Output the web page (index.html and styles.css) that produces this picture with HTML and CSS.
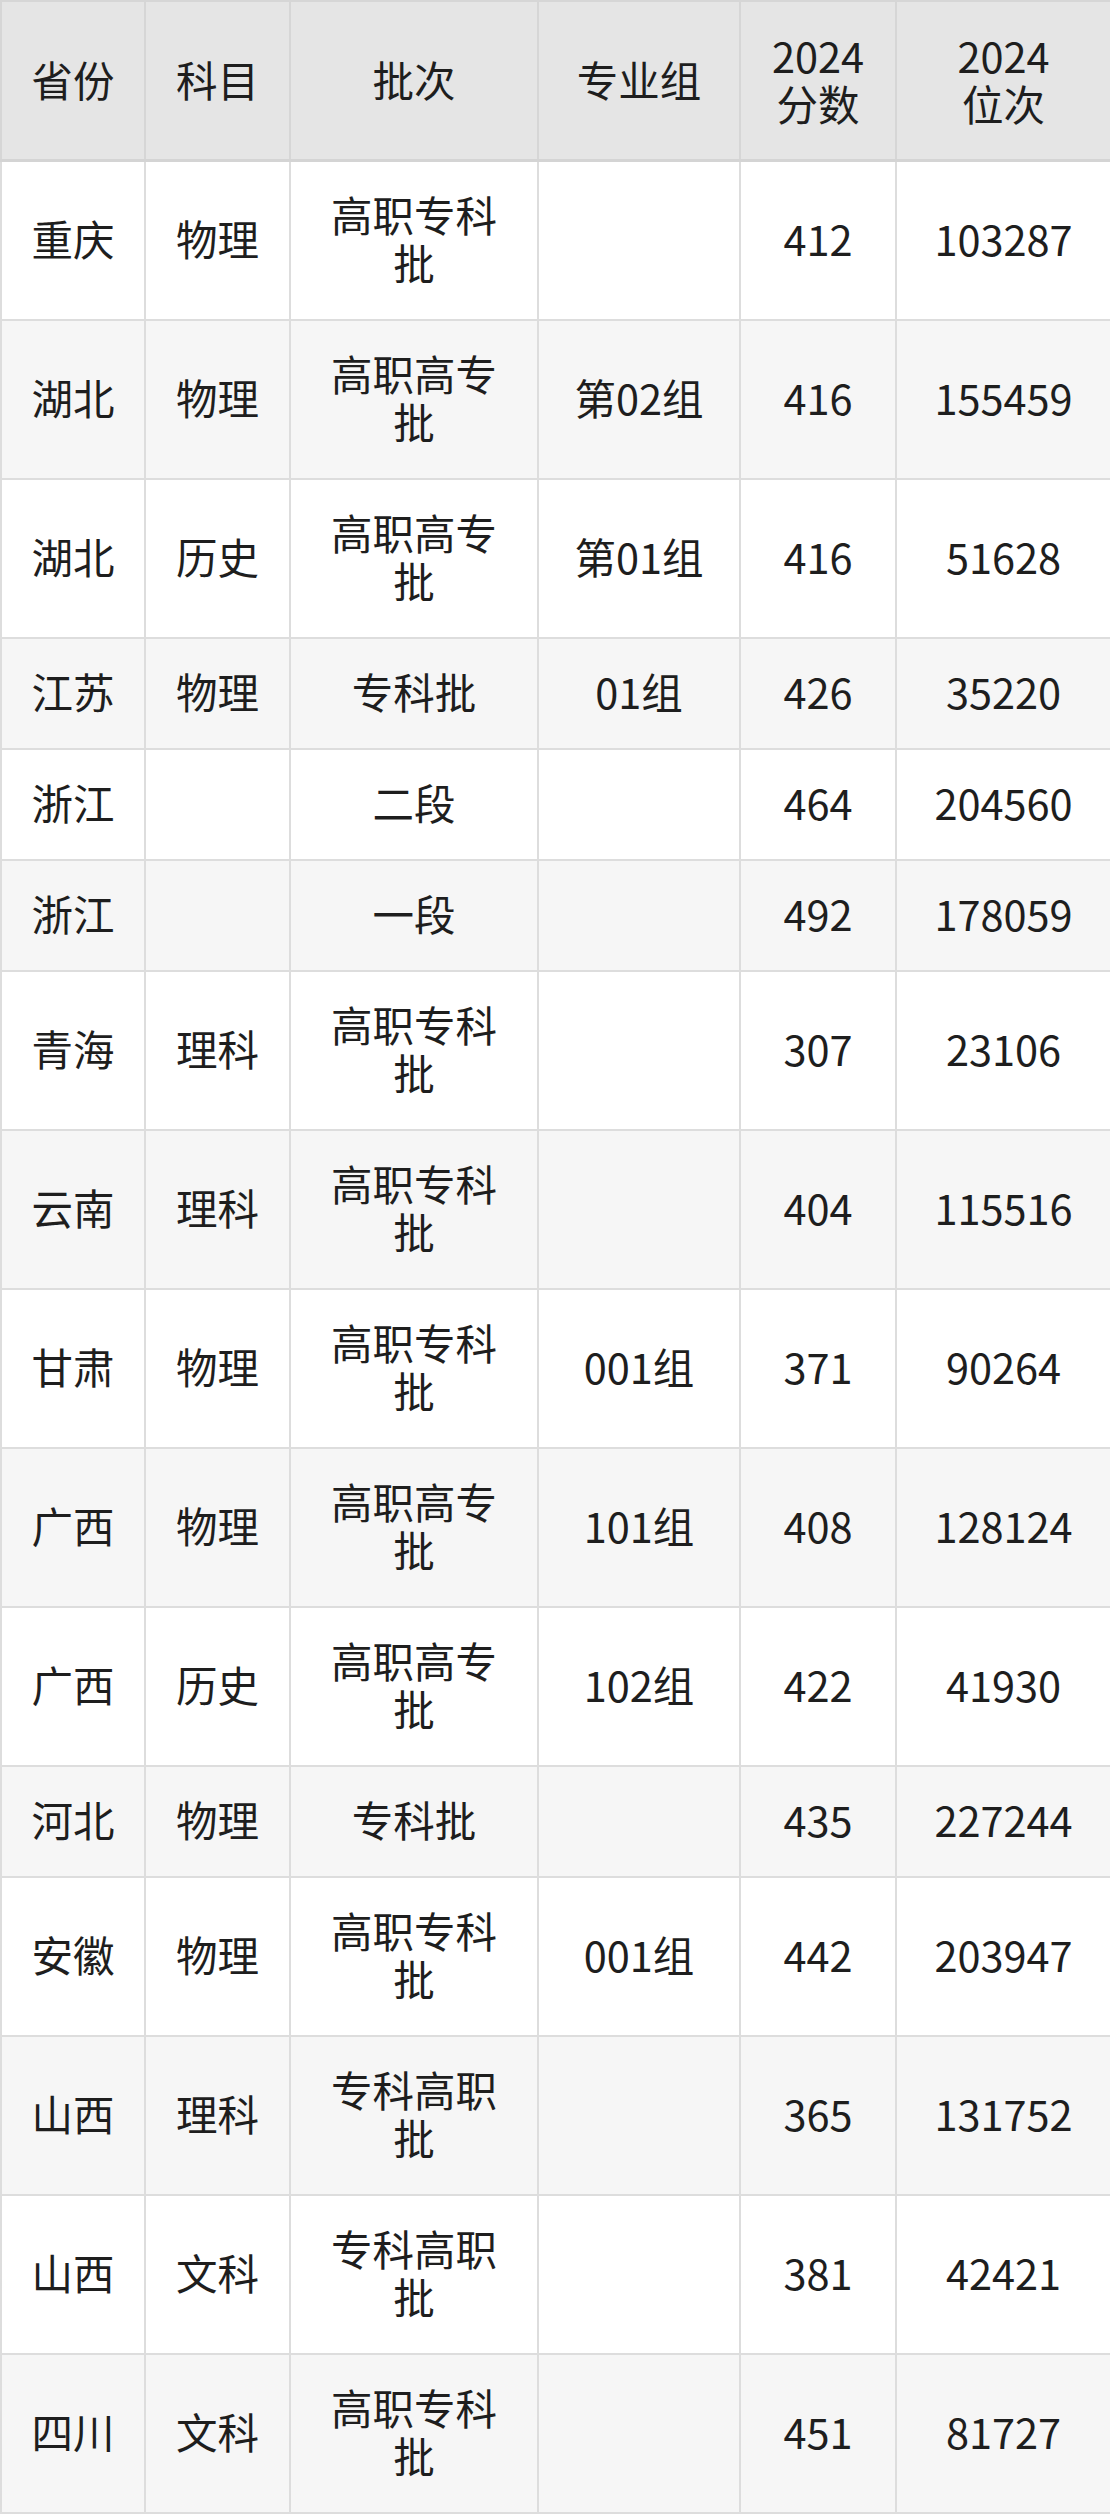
FILE: index.html
```html
<!DOCTYPE html>
<html lang="zh-CN">
<head>
<meta charset="utf-8">
<title>2024 分数位次</title>
<link rel="stylesheet" href="styles.css">
</head>
<body>
<table class="score-table">
  <colgroup>
    <col class="c-prov"><col class="c-subj"><col class="c-batch"><col class="c-group"><col class="c-score"><col class="c-rank">
  </colgroup>
  <thead>
    <tr><th>省份</th><th>科目</th><th>批次</th><th>专业组</th><th>2024<br>分数</th><th>2024<br>位次</th></tr>
  </thead>
  <tbody>
    <tr><td>重庆</td><td>物理</td><td>高职专科<br>批</td><td></td><td>412</td><td>103287</td></tr>
    <tr><td>湖北</td><td>物理</td><td>高职高专<br>批</td><td>第02组</td><td>416</td><td>155459</td></tr>
    <tr><td>湖北</td><td>历史</td><td>高职高专<br>批</td><td>第01组</td><td>416</td><td>51628</td></tr>
    <tr><td>江苏</td><td>物理</td><td>专科批</td><td>01组</td><td>426</td><td>35220</td></tr>
    <tr><td>浙江</td><td></td><td>二段</td><td></td><td>464</td><td>204560</td></tr>
    <tr><td>浙江</td><td></td><td>一段</td><td></td><td>492</td><td>178059</td></tr>
    <tr><td>青海</td><td>理科</td><td>高职专科<br>批</td><td></td><td>307</td><td>23106</td></tr>
    <tr><td>云南</td><td>理科</td><td>高职专科<br>批</td><td></td><td>404</td><td>115516</td></tr>
    <tr><td>甘肃</td><td>物理</td><td>高职专科<br>批</td><td>001组</td><td>371</td><td>90264</td></tr>
    <tr><td>广西</td><td>物理</td><td>高职高专<br>批</td><td>101组</td><td>408</td><td>128124</td></tr>
    <tr><td>广西</td><td>历史</td><td>高职高专<br>批</td><td>102组</td><td>422</td><td>41930</td></tr>
    <tr><td>河北</td><td>物理</td><td>专科批</td><td></td><td>435</td><td>227244</td></tr>
    <tr><td>安徽</td><td>物理</td><td>高职专科<br>批</td><td>001组</td><td>442</td><td>203947</td></tr>
    <tr><td>山西</td><td>理科</td><td>专科高职<br>批</td><td></td><td>365</td><td>131752</td></tr>
    <tr><td>山西</td><td>文科</td><td>专科高职<br>批</td><td></td><td>381</td><td>42421</td></tr>
    <tr><td>四川</td><td>文科</td><td>高职专科<br>批</td><td></td><td>451</td><td>81727</td></tr>
  </tbody>
</table>
</body>
</html>
```

FILE: styles.css
```css
html, body {
  margin: 0;
  padding: 0;
  background: #ffffff;
}

.score-table {
  width: 1110px;
  table-layout: fixed;
  border-collapse: collapse;
  font-family: "Noto Sans CJK SC", "Noto Sans", sans-serif;
  font-size: 41.5px;
  line-height: 48px;
  color: #1e1e1e;
}

.c-prov { width: 144px; }
.c-subj { width: 145px; }
.c-batch { width: 248px; }
.c-group { width: 202px; }
.c-score { width: 156px; }
.c-rank { width: 215px; }

.score-table th,
.score-table td {
  border: 2px solid #dddddd;
  padding: 28px 2px 33px;
  text-align: center;
  vertical-align: middle;
  font-weight: 400;
}

.score-table thead th {
  background: #e5e5e5;
  border-color: #d6d6d6;
  border-bottom: 3px solid #d4d4d4;
  padding: 29px 2px 32px;
}

.score-table tbody tr:nth-child(even) td {
  background: #f6f6f6;
}
```
